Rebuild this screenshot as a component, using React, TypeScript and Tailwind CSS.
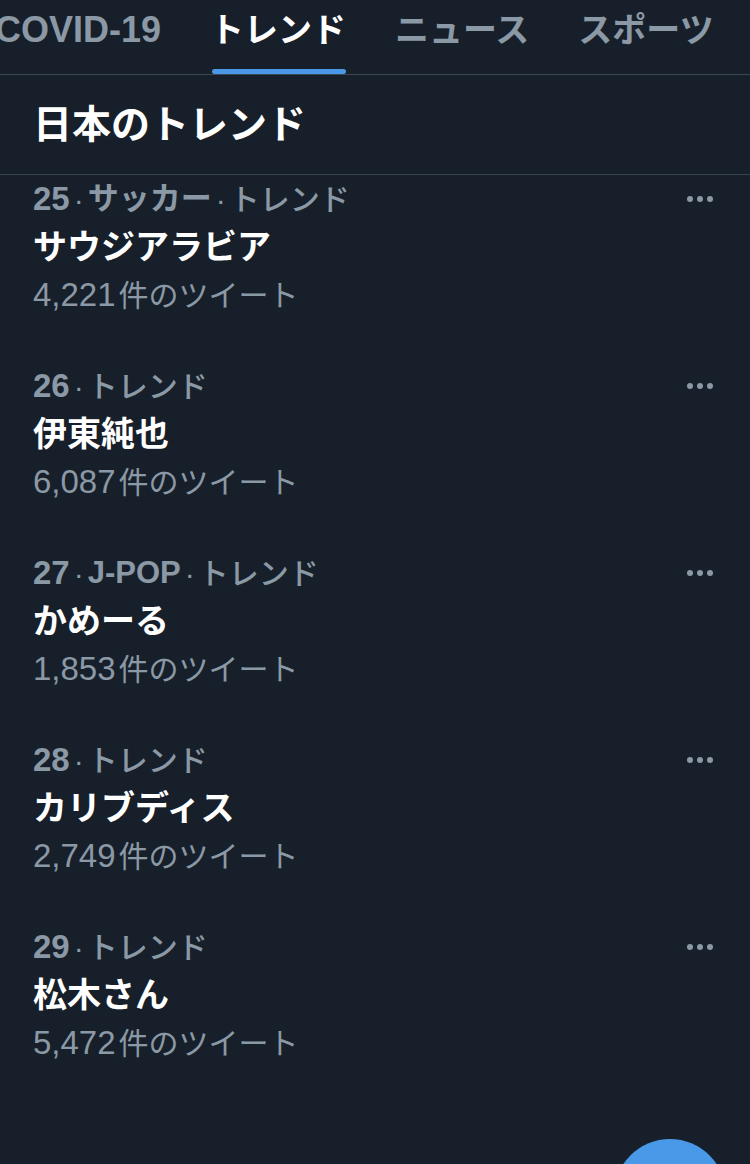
const trends = [
  { rank: 25, category: 'サッカー', name: 'サウジアラビア', count: '4,221' },
  { rank: 26, category: '', name: '伊東純也', count: '6,087' },
  { rank: 27, category: 'J-POP', name: 'かめーる', count: '1,853' },
  { rank: 28, category: '', name: 'カリブディス', count: '2,749' },
  { rank: 29, category: '', name: '松木さん', count: '5,472' },
];

const tabs = ['COVID-19', 'トレンド', 'ニュース', 'スポーツ'];

const App = () => {
  return (
    <div
      className="relative h-[1164px] w-[750px] overflow-hidden bg-[#17202a]"
      style={{ fontFamily: '"Liberation Sans", "Noto Sans CJK JP", sans-serif' }}
    >
      {/* tabs */}
      <div className="flex h-[75px] gap-[49px] border-b border-[#3b4651] -ml-[5px]">
        {tabs.map((tab) => {
          const active = tab === 'トレンド';
          return (
            <div key={tab} className="relative flex h-full flex-col items-center">
              <span
                className={
                  'mt-[10px] whitespace-nowrap font-bold leading-[40px] ' +
                  (tab === 'COVID-19' ? 'text-[36px] ' : 'text-[34px] ') +
                  (active ? 'text-white' : 'text-[#8b98a5]')
                }
              >
                {tab}
              </span>
              {active && (
                <div className="absolute bottom-0 left-[2px] right-[0px] h-[5px] rounded-full bg-[#4a99e9]" />
              )}
            </div>
          );
        })}
      </div>

      {/* section header */}
      <div className="flex h-[100px] items-center border-b border-[#38434d] pl-[33px]">
        <h1 className="text-[39px] font-bold leading-none text-white">日本のトレンド</h1>
      </div>

      {/* trend list */}
      <div className="flex flex-col">
        {trends.map((t) => (
          <div key={t.rank} className="flex h-[187px] justify-between pl-[33px] pr-[37px]">
            <div className="flex flex-col">
              <div className="flex h-[48px] items-center text-[30px] text-[#8b98a5]">
                <span className="text-[33px] font-bold">{t.rank}</span>
                <span className="mx-[4px] font-medium">·</span>
                {t.category && (
                  <>
                    <span className="text-[31px] font-bold">{t.category}</span>
                    <span className="mx-[4px] font-medium">·</span>
                  </>
                )}
                <span className="font-medium">トレンド</span>
              </div>
              <div className="text-[34px] font-bold leading-[48px] text-white">{t.name}</div>
              <div className="flex h-[48px] items-center text-[30px] text-[#8b98a5]">
                <span className="mr-[3px] text-[33px]">{t.count}</span>
                <span>件のツイート</span>
              </div>
            </div>
            <div className="flex h-[48px] items-center gap-[4px]">
              <span className="h-[6px] w-[6px] rounded-full bg-[#8b98a5]" />
              <span className="h-[6px] w-[6px] rounded-full bg-[#8b98a5]" />
              <span className="h-[6px] w-[6px] rounded-full bg-[#8b98a5]" />
            </div>
          </div>
        ))}
      </div>

      {/* floating compose button */}
      <div className="absolute left-[614px] top-[1139px] h-[112px] w-[112px] rounded-full bg-[#4a99e9]" />
    </div>
  );
};

export default App;
